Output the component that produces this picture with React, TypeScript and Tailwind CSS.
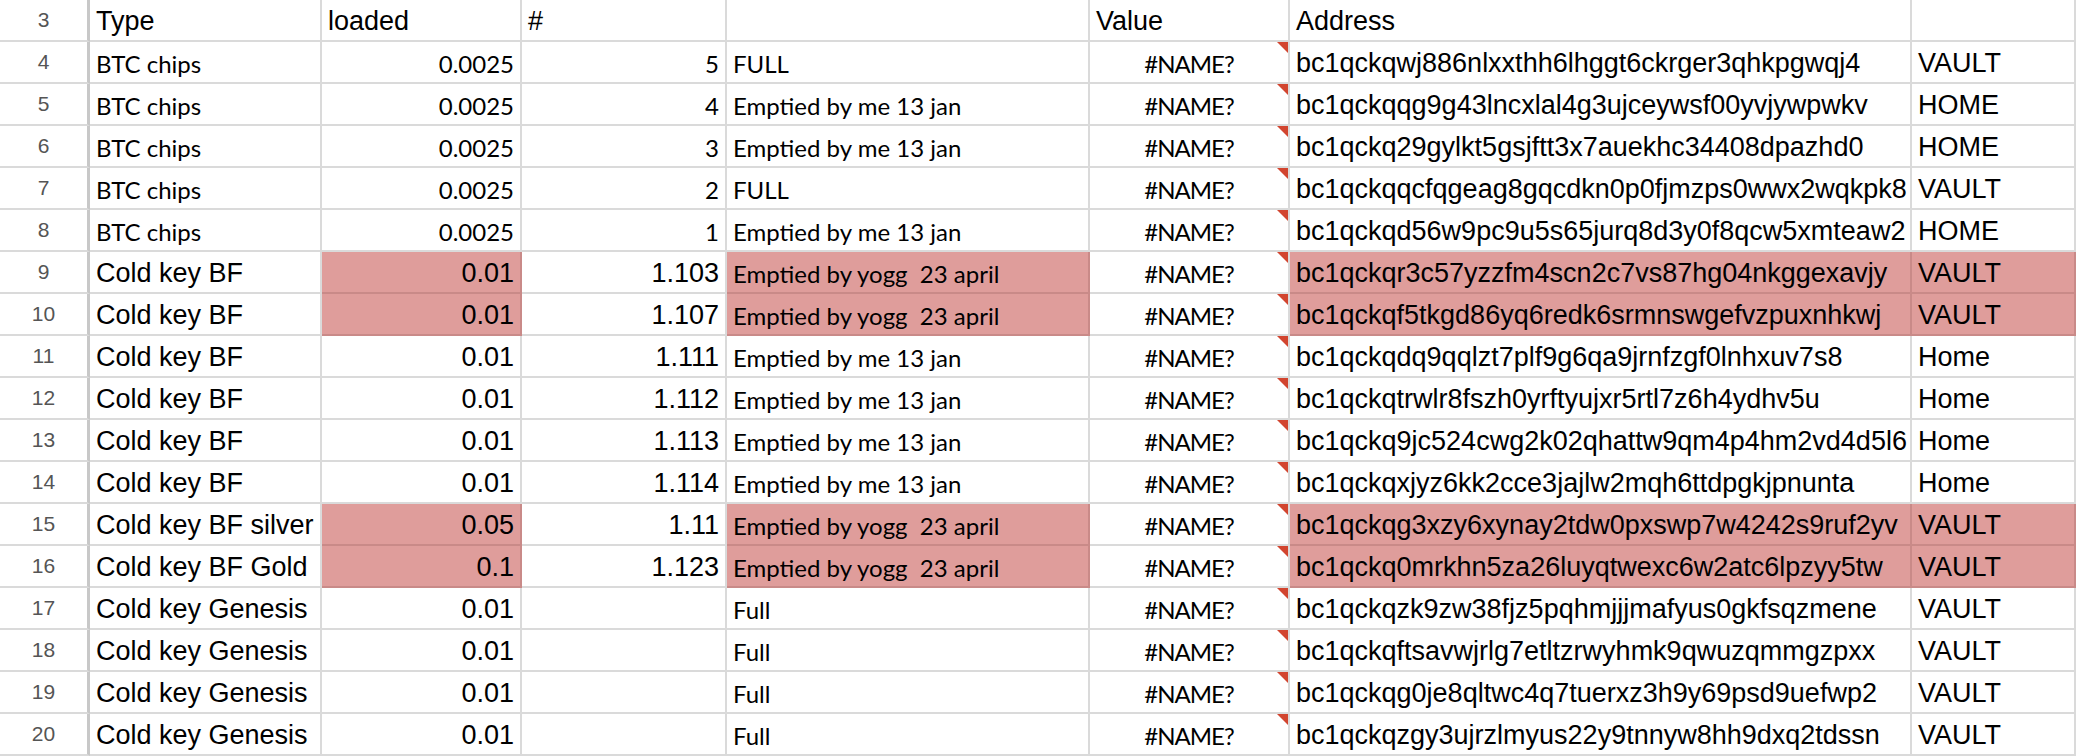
import { ReactNode } from 'react';

type Font = 'arial' | 'cal';
type Align = 'left' | 'right' | 'center';

const FONTS: Record<Font, string> = {
  arial: "font-['Liberation_Sans',Arial,sans-serif] text-[27px]",
  cal: "font-['Lato',sans-serif] text-[24px]",
};

const rows = [
  { n: 4, type: 'BTC chips', loaded: '0.0025', idx: '5', note: 'FULL', addr: 'bc1qckqwj886nlxxthh6lhggt6ckrger3qhkpgwqj4', place: 'VAULT', old: true },
  { n: 5, type: 'BTC chips', loaded: '0.0025', idx: '4', note: 'Emptied by me 13 jan', addr: 'bc1qckqqg9g43lncxlal4g3ujceywsf00yvjywpwkv', place: 'HOME', old: true },
  { n: 6, type: 'BTC chips', loaded: '0.0025', idx: '3', note: 'Emptied by me 13 jan', addr: 'bc1qckq29gylkt5gsjftt3x7auekhc34408dpazhd0', place: 'HOME', old: true },
  { n: 7, type: 'BTC chips', loaded: '0.0025', idx: '2', note: 'FULL', addr: 'bc1qckqqcfqgeag8gqcdkn0p0fjmzps0wwx2wqkpk8', place: 'VAULT', old: true },
  { n: 8, type: 'BTC chips', loaded: '0.0025', idx: '1', note: 'Emptied by me 13 jan', addr: 'bc1qckqd56w9pc9u5s65jurq8d3y0f8qcw5xmteaw2', place: 'HOME', old: true },
  { n: 9, type: 'Cold key BF', loaded: '0.01', idx: '1.103', note: 'Emptied by yogg  23 april', addr: 'bc1qckqr3c57yzzfm4scn2c7vs87hg04nkggexavjy', place: 'VAULT', pink: true },
  { n: 10, type: 'Cold key BF', loaded: '0.01', idx: '1.107', note: 'Emptied by yogg  23 april', addr: 'bc1qckqf5tkgd86yq6redk6srmnswgefvzpuxnhkwj', place: 'VAULT', pink: true },
  { n: 11, type: 'Cold key BF', loaded: '0.01', idx: '1.111', note: 'Emptied by me 13 jan', addr: 'bc1qckqdq9qqlzt7plf9g6qa9jrnfzgf0lnhxuv7s8', place: 'Home' },
  { n: 12, type: 'Cold key BF', loaded: '0.01', idx: '1.112', note: 'Emptied by me 13 jan', addr: 'bc1qckqtrwlr8fszh0yrftyujxr5rtl7z6h4ydhv5u', place: 'Home' },
  { n: 13, type: 'Cold key BF', loaded: '0.01', idx: '1.113', note: 'Emptied by me 13 jan', addr: 'bc1qckq9jc524cwg2k02qhattw9qm4p4hm2vd4d5l6', place: 'Home' },
  { n: 14, type: 'Cold key BF', loaded: '0.01', idx: '1.114', note: 'Emptied by me 13 jan', addr: 'bc1qckqxjyz6kk2cce3jajlw2mqh6ttdpgkjpnunta', place: 'Home' },
  { n: 15, type: 'Cold key BF silver', loaded: '0.05', idx: '1.11', note: 'Emptied by yogg  23 april', addr: 'bc1qckqg3xzy6xynay2tdw0pxswp7w4242s9ruf2yv', place: 'VAULT', pink: true },
  { n: 16, type: 'Cold key BF Gold', loaded: '0.1', idx: '1.123', note: 'Emptied by yogg  23 april', addr: 'bc1qckq0mrkhn5za26luyqtwexc6w2atc6lpzyy5tw', place: 'VAULT', pink: true },
  { n: 17, type: 'Cold key Genesis', loaded: '0.01', idx: '', note: 'Full', addr: 'bc1qckqzk9zw38fjz5pqhmjjjmafyus0gkfsqzmene', place: 'VAULT' },
  { n: 18, type: 'Cold key Genesis', loaded: '0.01', idx: '', note: 'Full', addr: 'bc1qckqftsavwjrlg7etltzrwyhmk9qwuzqmmgzpxx', place: 'VAULT' },
  { n: 19, type: 'Cold key Genesis', loaded: '0.01', idx: '', note: 'Full', addr: 'bc1qckqg0je8qltwc4q7tuerxz3h9y69psd9uefwp2', place: 'VAULT' },
  { n: 20, type: 'Cold key Genesis', loaded: '0.01', idx: '', note: 'Full', addr: 'bc1qckqzgy3ujrzlmyus22y9tnnyw8hh9dxq2tdssn', place: 'VAULT' },
];

const Cell = ({
  children,
  font = 'arial',
  align = 'left',
  pink = false,
  flag = false,
}: {
  children?: ReactNode;
  font?: Font;
  align?: Align;
  pink?: boolean;
  flag?: boolean;
}) => (
  <div
    className={`relative h-[42px] flex items-center overflow-hidden whitespace-pre border-r-2 border-b-2 px-[6px] pt-[3px] text-black
      ${FONTS[font]}
      ${align === 'right' ? 'justify-end' : align === 'center' ? 'justify-center' : 'justify-start'}
      ${pink ? 'bg-[#df9d9b] border-[#c98a88]' : 'bg-white border-[#dadada]'}`}
  >
    {children}
    {flag && (
      <span className="absolute top-0 right-0 w-0 h-0 border-t-[11px] border-l-[11px] border-t-[#d2452f] border-l-transparent"></span>
    )}
  </div>
);

const RowNum = ({ n }: { n: number }) => (
  <div className="h-[42px] flex items-center justify-center border-r-[3px] border-b-2 border-r-[#c8c8c8] border-b-[#dadada] bg-white font-['Liberation_Sans',Arial,sans-serif] text-[21px] text-[#555]">
    {n}
  </div>
);

export default function App() {
  return (
    <div className="w-[2076px] h-[756px] overflow-hidden bg-white">
      <div className="grid grid-cols-[90px_232px_200px_205px_363px_200px_622px_164px] border-t-2 border-[#dadada] -mt-[2px]">
        {/* header row */}
        <RowNum n={3} />
        <Cell>Type</Cell>
        <Cell>loaded</Cell>
        <Cell>#</Cell>
        <Cell></Cell>
        <Cell>Value</Cell>
        <Cell>Address</Cell>
        <Cell></Cell>

        {rows.map((r) => (
          <div key={r.n} className="contents">
            <RowNum n={r.n} />
            <Cell font={r.old ? 'cal' : 'arial'}>{r.type}</Cell>
            <Cell font={r.old ? 'cal' : 'arial'} align="right" pink={r.pink}>{r.loaded}</Cell>
            <Cell font={r.old ? 'cal' : 'arial'} align="right">{r.idx}</Cell>
            <Cell font="cal" pink={r.pink}>{r.note}</Cell>
            <Cell font="cal" align="center" flag>
              <span className="tracking-[-1px]">#NAME?</span>
            </Cell>
            <Cell pink={r.pink}>{r.addr}</Cell>
            <Cell pink={r.pink}>{r.place}</Cell>
          </div>
        ))}
      </div>
    </div>
  );
}
